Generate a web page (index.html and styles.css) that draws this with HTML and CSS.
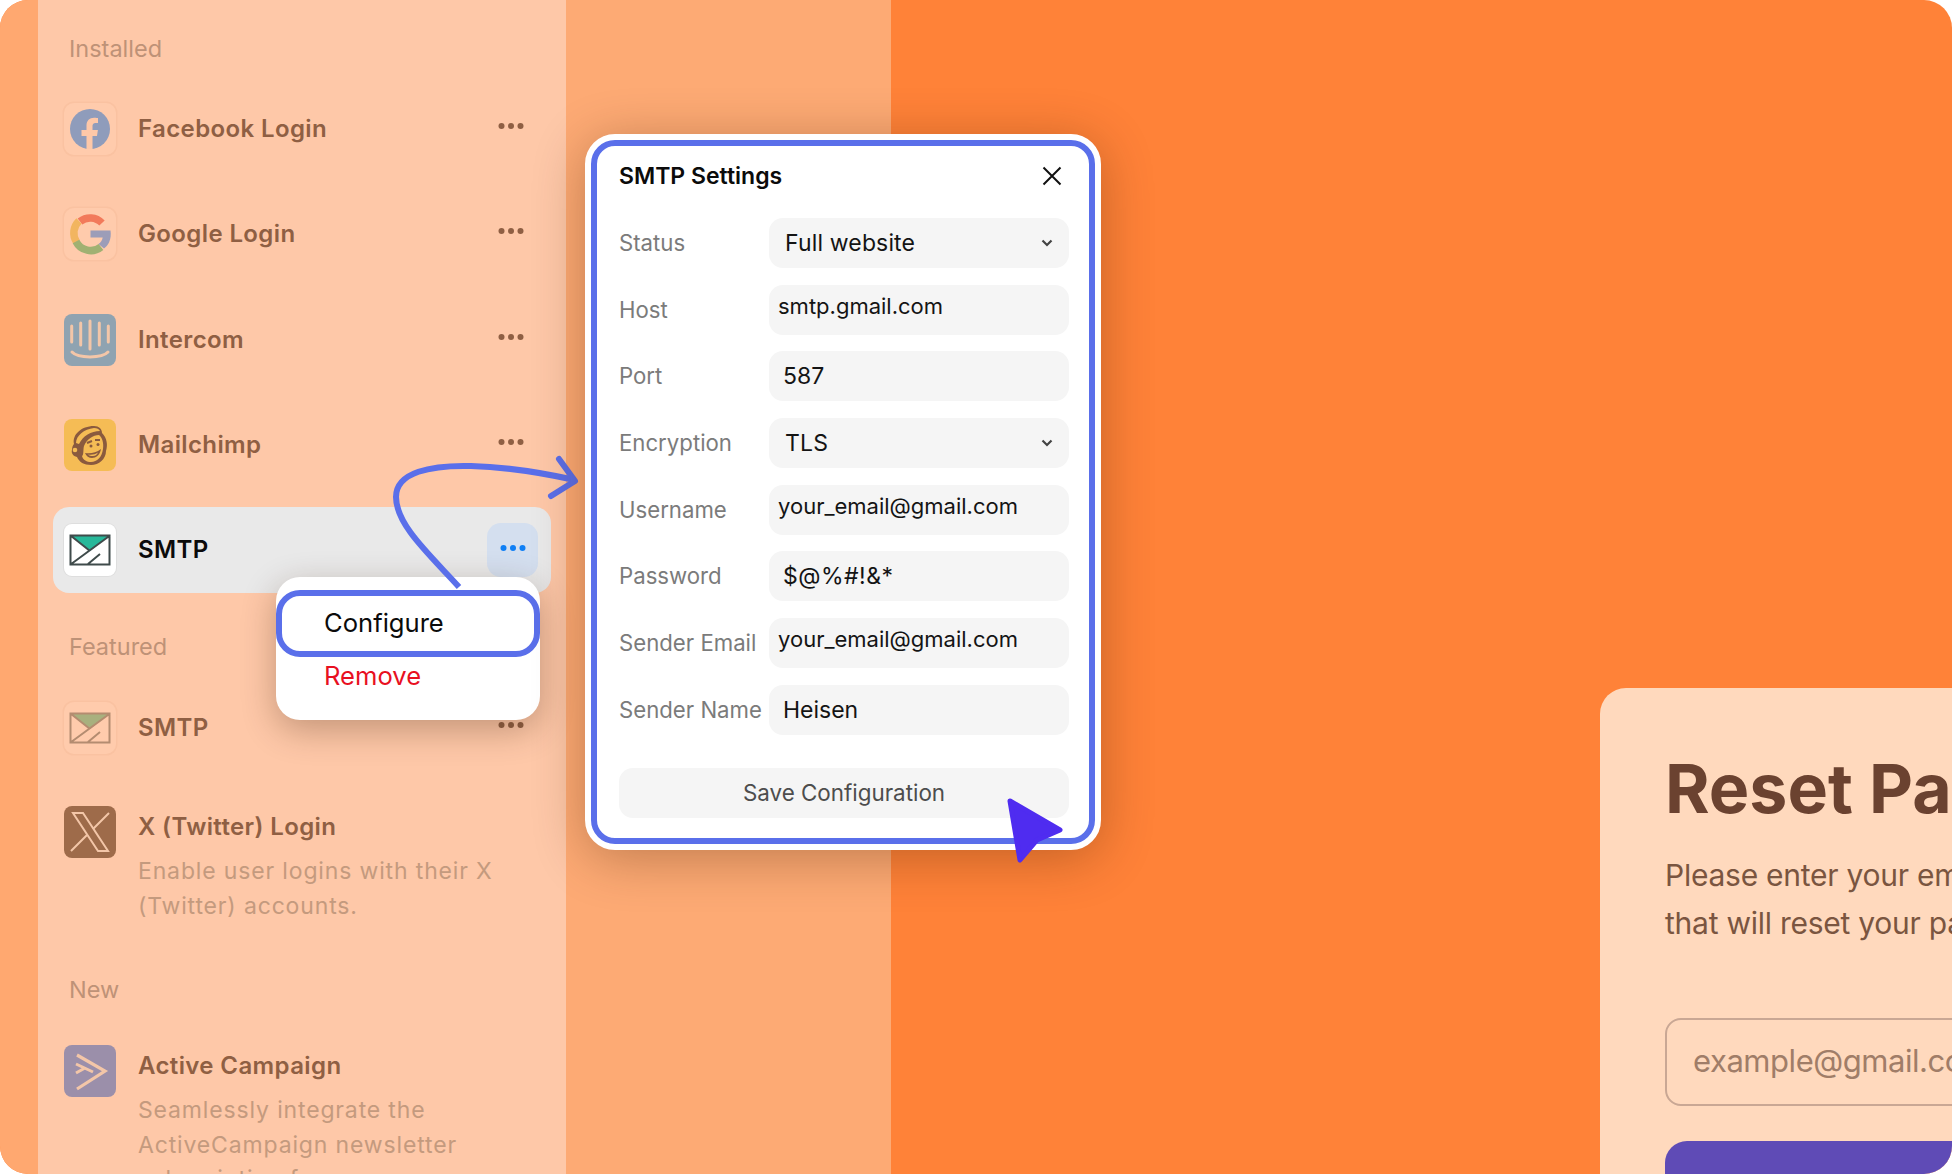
FILE: index.html
```html
<!DOCTYPE html>
<html lang="en">
<head>
<meta charset="utf-8">
<title>SMTP Settings</title>
<link rel="stylesheet" href="styles.css">
</head>
<body>
<div class="stage">
  <div class="strip"></div>
  <aside class="sidebar">
    <div class="label label-installed">Installed</div>
    <div class="list">
      <div class="row">
        <span class="tile tile-faint"><svg viewBox="0 0 52 52" class="ico"><circle cx="26" cy="26" r="20" fill="#8F9CBB"/><path d="M22.500 46V33h-5v-6h5v-4.500c0-5 3-7.800 7.600-7.800 2.100 0 3.900.3 3.900.3v5h-2.400c-2.500 0-3.100 1.500-3.100 3.100V27h5.400l-.9 6h-4.500v13z" fill="#FEC8A8"/></svg></span>
        <span class="name">Facebook Login</span>
        <span class="more"><svg viewBox="0 0 26 8" class="dots"><circle cx="3.500" cy="4" r="3"/><circle cx="13" cy="4" r="3"/><circle cx="22.500" cy="4" r="3"/></svg></span>
      </div>
      <div class="row">
        <span class="tile tile-faint"><svg viewBox="0 0 52 52" class="ico"><g fill="none" stroke-width="7.500"><path d="M38 15a16.500 16.500 0 0 0-22-1.500" stroke="#F27A5B"/><path d="M15 13a16.500 16.500 0 0 0-2.500 21" stroke="#F2B560"/><path d="M12 33.500a16.500 16.500 0 0 0 25 5.500" stroke="#A0B172"/></g><path d="M26.500 22.500h20c.6 4 .3 8-1.500 12-1.200 2.500-3 4.500-5 6l-5.500-4.500c2.300-1.500 3.700-3.500 4.200-6.500H26.500z" fill="#9C9DB8"/></svg></span>
        <span class="name">Google Login</span>
        <span class="more"><svg viewBox="0 0 26 8" class="dots"><circle cx="3.500" cy="4" r="3"/><circle cx="13" cy="4" r="3"/><circle cx="22.500" cy="4" r="3"/></svg></span>
      </div>
      <div class="row">
        <span class="tile tile-intercom"><svg viewBox="0 0 52 52" class="ico"><g fill="none" stroke="#F3C6A8" stroke-width="3" stroke-linecap="round"><path d="M7.700 12v16M16.700 9v22M26 7v28M35.300 9v22M44.300 12v16"/><path d="M8 38c6 6.500 30 6.500 36 0"/></g></svg></span>
        <span class="name">Intercom</span>
        <span class="more"><svg viewBox="0 0 26 8" class="dots"><circle cx="3.500" cy="4" r="3"/><circle cx="13" cy="4" r="3"/><circle cx="22.500" cy="4" r="3"/></svg></span>
      </div>
      <div class="row">
        <span class="tile tile-chimp"><svg viewBox="0 0 52 52" class="ico"><path d="M10 25C8 16 17 7 30 7c5 0 8 3 8 7 5 5 6 12 4 18 0 8-7 14-15 14-7 0-12-3-14-8-4-1-6-4-5-7 0-3 1-5 2-6z" fill="#8A5A3E"/><path d="M12 24c0-7 8-14 18-15 3 0 5 1 6 3-9 0-17 5-21 13z" fill="#F5BC55"/><path d="M20 27c3-7 9-11 15-11 3 2 5 8 4 14-1 8-6 13-12 13-4 0-8-2-9-6 2-1 1-7 2-10z" fill="#F5BC55"/><path d="M21 34c5 1 11 0 16-4-1 6-5 9-9 9-3 0-6-2-7-5z" fill="#8A5A3E"/><path d="M24 35.500c4 .5 7 0 10-2-1 2.500-3 3.500-5 3.500s-4-.5-5-1.500z" fill="#F5BC55"/><path d="M23 24l5-2M31 21l5 0" fill="none" stroke="#8A5A3E" stroke-width="2"/><circle cx="27" cy="27" r="1.500" fill="#8A5A3E"/><circle cx="34" cy="25.500" r="1.500" fill="#8A5A3E"/><circle cx="11" cy="31" r="2.300" fill="#F5BC55"/></svg></span>
        <span class="name">Mailchimp</span>
        <span class="more"><svg viewBox="0 0 26 8" class="dots"><circle cx="3.500" cy="4" r="3"/><circle cx="13" cy="4" r="3"/><circle cx="22.500" cy="4" r="3"/></svg></span>
      </div>
      <div class="row row-active">
        <span class="tile tile-white"><svg viewBox="0 0 52 52" class="ico"><path d="M6 11h40L26 27z" fill="#27B89A"/><path d="M6.500 11.500h39v29h-39zM6.500 11.500 26 27M6.500 40.500 46 11.500M24 40l12-10" fill="none" stroke="#3F4B4B" stroke-width="2"/></svg></span>
        <span class="name name-active">SMTP</span>
        <span class="more more-active"><svg viewBox="0 0 26 8" class="dots dots-active"><circle cx="3.500" cy="4" r="3"/><circle cx="13" cy="4" r="3"/><circle cx="22.500" cy="4" r="3"/></svg></span>
      </div>
    </div>
    <div class="label label-featured">Featured</div>
    <div class="row">
      <span class="tile tile-faint"><svg viewBox="0 0 52 52" class="ico"><path d="M6 11h40L26 27z" fill="#A8B07E"/><path d="M6.500 11.500h39v29h-39zM6.500 11.500 26 27M6.500 40.500 46 11.500M24 40l12-10" fill="none" stroke="#B48C70" stroke-width="2"/></svg></span>
      <span class="name">SMTP</span>
      <span class="more"><svg viewBox="0 0 26 8" class="dots"><circle cx="3.500" cy="4" r="3"/><circle cx="13" cy="4" r="3"/><circle cx="22.500" cy="4" r="3"/></svg></span>
    </div>
    <div class="row row-tall row-x">
      <span class="tile tile-x"><svg viewBox="0 0 52 52" class="ico"><path d="M9 7h10l25 38H34z" fill="none" stroke="#F3C6A8" stroke-width="2"/><path d="M45 7 29 23M23 29 7 45" fill="none" stroke="#F3C6A8" stroke-width="2"/></svg></span>
      <div class="body">
        <div class="name">X (Twitter) Login</div>
        <p class="desc">Enable user logins with their X (Twitter) accounts.</p>
      </div>
    </div>
    <div class="label label-new">New</div>
    <div class="row row-tall row-ac">
      <span class="tile tile-ac"><svg viewBox="0 0 52 52" class="ico"><path d="M13 10 41 26 13 44" fill="none" stroke="#F3C6A8" stroke-width="3.200"/><path d="M12 19 29 27M12 28 21 23" fill="none" stroke="#F3C6A8" stroke-width="3"/></svg></span>
      <div class="body">
        <div class="name">Active Campaign</div>
        <p class="desc">Seamlessly integrate the ActiveCampaign newsletter subscription form</p>
      </div>
    </div>
  </aside>
  <div class="middle"></div>
  <main class="main">
    <section class="reset">
      <h1 class="reset-title">Reset Password</h1>
      <p class="reset-text">Please enter your email address and we'll send a link<br>that will reset your password.</p>
      <div class="reset-input">example@gmail.com</div>
      <div class="reset-btn"></div>
    </section>
  </main>

  <div class="menu">
    <div class="menu-item menu-config">Configure</div>
    <div class="menu-item menu-remove">Remove</div>
  </div>

  <svg class="arrow" viewBox="0 0 1952 1174" aria-hidden="true">
    <path d="M459 587C430 555 396 525 396 497c0-25 35-32 75-31 40 1 72 7 104 14" fill="none" stroke="#5A6FEA" stroke-width="6"/>
    <path d="M559 459 575 481 551 496" fill="none" stroke="#5A6FEA" stroke-width="6" stroke-linecap="round" stroke-linejoin="round"/>
  </svg>

  <div class="modal">
    <div class="modal-inner">
      <div class="modal-head">
        <h2 class="modal-title">SMTP Settings</h2>
        <svg class="close" viewBox="0 0 20 20"><path d="M1.500 1.500l17 17M18.500 1.500l-17 17" fill="none" stroke="#111" stroke-width="2"/></svg>
      </div>
      <div class="form">
        <div class="flabel">Status</div>
        <div class="field field-select"><span>Full website</span><svg class="chev" viewBox="0 0 12 8"><path d="M1.500 1.500 6 6l4.500-4.500" fill="none" stroke="#444" stroke-width="2.200"/></svg></div>
        <div class="flabel">Host</div>
        <div class="field field-raised">smtp.gmail.com</div>
        <div class="flabel">Port</div>
        <div class="field field-mid">587</div>
        <div class="flabel">Encryption</div>
        <div class="field field-select"><span>TLS</span><svg class="chev" viewBox="0 0 12 8"><path d="M1.500 1.500 6 6l4.500-4.500" fill="none" stroke="#444" stroke-width="2.200"/></svg></div>
        <div class="flabel">Username</div>
        <div class="field field-raised">your_email@gmail.com</div>
        <div class="flabel">Password</div>
        <div class="field field-mid field-secret">$@%#!&amp;*</div>
        <div class="flabel">Sender Email</div>
        <div class="field field-raised">your_email@gmail.com</div>
        <div class="flabel">Sender Name</div>
        <div class="field field-mid">Heisen</div>
      </div>
      <div class="save">Save Configuration</div>
    </div>
  </div>

  <svg class="cursor" viewBox="0 0 70 76" aria-hidden="true">
    <path d="M6 6 56 35 33 45 16 65z" fill="#4F2CF0" stroke="#4F2CF0" stroke-width="5" stroke-linejoin="round"/>
  </svg>
</div>
</body>
</html>
```
FILE: styles.css
```css
* { box-sizing: border-box; }
html, body { margin: 0; background: #fff; }
body { font-family: "Inter", "Liberation Sans", sans-serif; }

.stage {
  position: relative;
  display: flex;
  width: 1952px;
  height: 1174px;
  overflow: hidden;
  border-radius: 28px;
  background: #FF8238;
}
.strip { width: 38px; flex: none; background: #FFA870; }

.sidebar {
  width: 528px;
  flex: none;
  padding: 0 15px 0 15px;
  overflow: hidden;
  background: #FEC8A8;
}
.label { padding-left: 16px; font-size: 23.500px; line-height: 30px; color: #BE9277; }
.label-installed { margin-top: 34px; }
.list { display: flex; flex-direction: column; gap: 19.250px; margin-top: 22px; }
.label-featured { margin-top: 39px; }
.label-new { margin-top: 52px; }

.row {
  display: flex;
  align-items: center;
  gap: 22px;
  height: 86px;
  padding: 0 13px 0 11px;
  border-radius: 16px;
}
.row-active { background: #E9E9E9; }
.row-tall { align-items: flex-start; height: auto; }
.row-x { margin-top: 35px; }
.row-ac { margin-top: 40px; }
.label-featured + .row { margin-top: 23px; }

.tile { flex: none; display: block; width: 52px; height: 52px; border-radius: 8px; }
.ico { display: block; width: 52px; height: 52px; }
.tile-faint { box-shadow: 0 0 0 1.500px #FAC2A1; background: #FFCBAC; border-radius: 10px; }
.tile-intercom { background: #8FA3B1; }
.tile-chimp { background: #F5BC55; }
.tile-white { background: #fff; box-shadow: 0 0 0 1px #DEDEDE; }
.tile-x { background: #9E6B4A; }
.tile-ac { background: #9B8FAA; }

.name { font-size: 24px; line-height: 30px; font-weight: 600; letter-spacing: .38px; color: #8F5F43; }
.name-active { color: #0B0B0B; }
.body { width: 365px; margin-top: 6px; }
.desc { margin: 12px 0 0; font-size: 23px; line-height: 34.500px; letter-spacing: .85px; color: #C49A7E; }

.more {
  display: flex;
  align-items: center;
  justify-content: center;
  width: 51px;
  height: 54px;
  margin-left: auto;
  margin-top: -6px;
  padding-right: 4px;
  border-radius: 14px;
}
.more-active { margin-top: 0; padding: 0 0 4px; background: #D4DFEF; }
.dots { width: 26px; height: 8px; fill: #8F5F43; }
.dots-active { fill: #0F7FF5; }

.middle { width: 325px; flex: none; background: #FDAA74; }
.main { flex: 1; min-width: 0; overflow: hidden; }

.reset {
  width: 800px;
  height: 486px;
  margin: 688px 0 0 709px;
  padding: 0 0 0 65px;
  border-radius: 26px 0 0 0;
  background: #FFD9BD;
}
.reset-title { margin: 0; padding-top: 60px; font-size: 68px; line-height: 80px; font-weight: 700; white-space: nowrap; color: #6B4230; }
.reset-text { margin: 24px 0 0; font-size: 30px; line-height: 47.500px; letter-spacing: -.25px; white-space: nowrap; color: #7A5540; }
.reset-input {
  width: 700px;
  height: 88px;
  margin-top: 71px;
  padding-left: 26px;
  border: 2px solid #C9A794;
  border-radius: 16px;
  font-size: 31px;
  line-height: 82px;
  letter-spacing: -.45px;
  color: #A07D68;
}
.reset-btn { width: 700px; height: 80px; margin-top: 35px; border-radius: 22px 0 0 0; background: #5F4BB6; }

.menu {
  position: absolute;
  left: 276px;
  top: 577px;
  width: 264px;
  height: 143px;
  padding-top: 13px;
  border-radius: 24px;
  background: #fff;
  box-shadow: 0 10px 34px rgba(60, 30, 10, .3);
}
.menu-item { padding-left: 48px; font-size: 25.600px; }
.menu-config {
  height: 67px;
  margin: 0;
  padding-left: 42px;
  border: 6px solid #5A6FEA;
  border-radius: 24px;
  line-height: 54px;
  color: #0B0B0B;
}
.menu-remove { margin-top: -1px; line-height: 40px; color: #E8101F; }

.arrow { position: absolute; left: 0; top: 0; width: 1952px; height: 1174px; pointer-events: none; }

.modal {
  position: absolute;
  left: 585px;
  top: 134px;
  width: 516px;
  height: 716px;
  border: 6px solid #fff;
  border-radius: 30px;
  background: #fff;
  box-shadow: 0 8px 52px rgba(70, 30, 0, .33);
}
.modal-inner {
  height: 100%;
  padding: 15px 20px 0 22px;
  border: 6px solid #5A6FEA;
  border-radius: 24px;
  background: #fff;
}
.modal-head { display: flex; align-items: center; justify-content: space-between; height: 30px; }
.modal-title { margin: 0; font-size: 23px; line-height: 30px; font-weight: 600; color: #0B0B0B; }
.close { width: 20px; height: 20px; margin-right: 7px; }

.form { display: grid; grid-template-columns: 150px 300px; row-gap: 16.700px; margin-top: 27px; }
.flabel { font-size: 22.200px; line-height: 50px; color: #7B7B7B; white-space: nowrap; }
.field {
  height: 50px;
  padding-left: 14px;
  border-radius: 14px;
  background: #F5F5F5;
  font-size: 23px;
  line-height: 50px;
  color: #141414;
}
.field-raised { padding-left: 9px; font-size: 22px; line-height: 43px; }
.field-secret { letter-spacing: .5px; }
.field-select { display: flex; align-items: center; justify-content: space-between; padding: 0 16px 0 16px; letter-spacing: .15px; }
.chev { width: 12px; height: 8px; }
.save {
  height: 50px;
  margin-top: 33px;
  border-radius: 14px;
  background: #F5F5F5;
  font-size: 22.400px;
  line-height: 50px;
  text-align: center;
  color: #4D4D4D;
}

.cursor { position: absolute; left: 1004px; top: 795px; width: 70px; height: 76px; pointer-events: none; }
```
